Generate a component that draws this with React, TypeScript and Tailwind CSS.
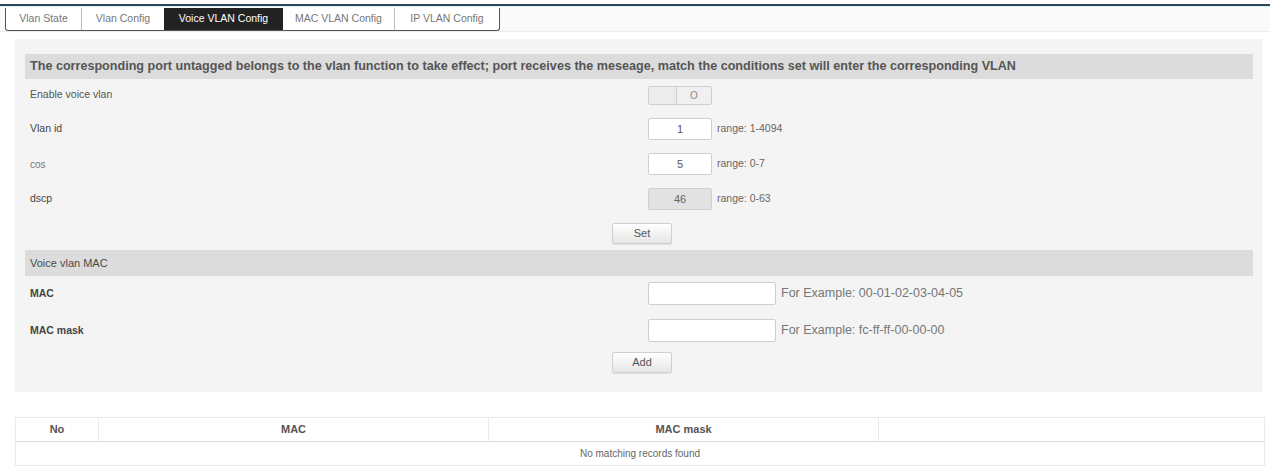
import React from 'react';

const TABS = ['Vlan State', 'Vlan Config', 'Voice VLAN Config', 'MAC VLAN Config', 'IP VLAN Config'];
const TAB_WIDTHS = ['w-[75px]', 'w-[83px]', 'w-[119px]', 'w-[111px]', 'w-[105px]'];

const Row: React.FC<{ label: string; labelClass?: string; children: React.ReactNode; h: string }> = ({
  label,
  labelClass = '',
  children,
  h,
}) => (
  <div className={`flex items-center ${h}`}>
    <div className={`w-[633px] pl-[15px] text-[10.5px] ${labelClass}`}>{label}</div>
    <div className="flex items-center">{children}</div>
  </div>
);

const Btn: React.FC<{ label: string }> = ({ label }) => (
  <div className="flex justify-start pl-[597px]">
    <button className="w-[60px] h-[21px] text-[11px] text-[#555] bg-gradient-to-b from-white to-[#e6e6e6] border border-[#d0d0d0] rounded-[2px] shadow-[0_1px_1px_rgba(0,0,0,0.08)]">
      {label}
    </button>
  </div>
);

export default function App() {
  return (
    <div className="w-[1270px] h-[468px] bg-white overflow-hidden text-[11px] text-[#555]" style={{ fontFamily: '"Liberation Sans", Arial, sans-serif' }}>
      {/* top line */}
      <div className="h-[4px] bg-white" />
      <div className="h-[2px] bg-[#2d4656]" />
      <div className="h-[1px] bg-[#dff3f6]" />
      {/* tabs strip */}
      <div className="h-[25px] bg-[#fafafa] border-b border-[#ececec] pl-[5px] pt-[1px]">
        <div className="flex h-[23px] border border-t-0 border-[#555] rounded-b-[3px] w-max bg-white overflow-hidden">
          {TABS.map((t, i) => (
            <div
              key={t}
              className={`${TAB_WIDTHS[i]} flex items-center justify-center text-[10.5px] ${
                i === 2 ? 'bg-[#222] text-white' : 'text-[#777]'
              } ${i === 1 || i === 4 ? 'border-l border-[#bbb]' : ''}`}
            >
              {t}
            </div>
          ))}
        </div>
      </div>

      {/* main panel */}
      <div className="ml-[15px] mr-[7px] mt-[7px] h-[353px] bg-[#f4f4f4] pt-[15px] px-[10px]">
        <div className="h-[25px] bg-[#dcdcdc] flex items-center pl-[5px] text-[12.6px] font-bold text-[#555] whitespace-nowrap">
          The corresponding port untagged belongs to the vlan function to take effect; port receives the meseage, match the conditions set will enter the corresponding VLAN
        </div>
        <div className="-ml-[10px]">
          <div className="h-[6px]" />
          <Row label="Enable voice vlan" h="h-[20px]">
            <div className="flex w-[64px] h-[19px] border border-[#cfcfcf] rounded-[2px] bg-[#f0f0f0]">
              <div className="w-[28px] bg-[#ececec] border-r border-[#cfcfcf]" />
              <div className="flex-1 flex items-center justify-center text-[10px] text-[#888]">O</div>
            </div>
          </Row>
          <div className="h-[13px]" />
          <Row label="Vlan id" labelClass="text-[#444]" h="h-[22px]">
            <div className="w-[64px] h-[22px] bg-white border border-[#cfcfcf] rounded-[2px] flex items-center justify-center text-[#555]">1</div>
            <span className="ml-[5px] text-[10.5px] text-[#666]">range: 1-4094</span>
          </Row>
          <div className="h-[13px]" />
          <Row label="cos" labelClass="!text-[10px] text-[#777]" h="h-[22px]">
            <div className="w-[64px] h-[22px] bg-white border border-[#cfcfcf] rounded-[2px] flex items-center justify-center text-[#555]">5</div>
            <span className="ml-[5px] text-[10.5px] text-[#666]">range: 0-7</span>
          </Row>
          <div className="h-[13px]" />
          <Row label="dscp" labelClass="text-[#444]" h="h-[22px]">
            <div className="w-[64px] h-[22px] bg-[#e2e2e2] border border-[#cfcfcf] rounded-[2px] flex items-center justify-center text-[#666]">46</div>
            <span className="ml-[5px] text-[10.5px] text-[#666]">range: 0-63</span>
          </Row>
          <div className="h-[13px]" />
          <Btn label="Set" />
          <div className="h-[6px]" />
        </div>
        <div className="h-[26px] bg-[#dcdcdc] flex items-center pl-[5px] text-[11px] text-[#4a4a4a]">Voice vlan MAC</div>
        <div className="-ml-[10px]">
          <div className="h-[6px]" />
          <Row label="MAC" labelClass="font-bold text-[#444]" h="h-[23px]">
            <div className="w-[128px] h-[23px] bg-white border border-[#cfcfcf] rounded-[2px]" />
            <span className="ml-[5px] text-[12.5px] text-[#777]">For Example: 00-01-02-03-04-05</span>
          </Row>
          <div className="h-[14px]" />
          <Row label="MAC mask" labelClass="font-bold text-[#444]" h="h-[23px]">
            <div className="w-[128px] h-[23px] bg-white border border-[#cfcfcf] rounded-[2px]" />
            <span className="ml-[5px] text-[12.5px] text-[#777]">For Example: fc-ff-ff-00-00-00</span>
          </Row>
          <div className="h-[10px]" />
          <Btn label="Add" />
        </div>
      </div>

      {/* table */}
      <div className="ml-[15px] mr-[5px] mt-[25px]">
        <div className="flex h-[25px] border-t border-[#eaeaea] border-b border-b-[#dcdcdc] font-bold text-[#555] text-[11px]">
          <div className="w-[83px] flex items-center justify-center border-l border-[#eaeaea]">No</div>
          <div className="w-[390px] flex items-center justify-center border-l border-[#eaeaea]">MAC</div>
          <div className="w-[390px] flex items-center justify-center border-l border-[#eaeaea]">MAC mask</div>
          <div className="flex-1 border-l border-r border-[#eaeaea]" />
        </div>
        <div className="h-[24px] flex items-center justify-center border-l border-r border-b border-[#eaeaea] text-[10px] text-[#666]">
          No matching records found
        </div>
      </div>
    </div>
  );
}
